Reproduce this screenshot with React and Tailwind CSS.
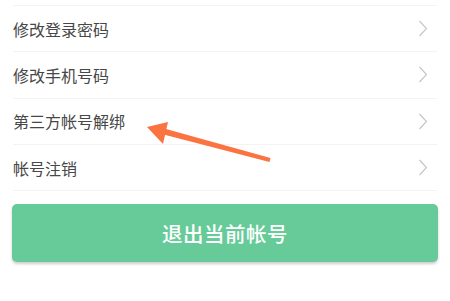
import React from "react";

const items = ["修改登录密码", "修改手机号码", "第三方帐号解绑", "帐号注销"];

const Chevron = () => (
  <svg width="10" height="17" viewBox="0 0 10 17" className="shrink-0">
    <path d="M1.5 1 L8.5 8.5 L1.5 16" fill="none" stroke="#c4c4c4" strokeWidth="1.1" />
  </svg>
);

const App = () => {
  return (
    <div
      className="relative w-[450px] h-[301px] bg-white overflow-hidden"
      style={{ fontFamily: '"Noto Sans CJK SC", "Noto Sans", sans-serif' }}
    >
      <div className="px-[13px]">
        <div className="h-[6px] border-b border-[#f3f3f3]" />
        {items.map((label) => (
          <div
            key={label}
            className="h-[46.3px] flex items-center justify-between border-b border-[#f3f3f3] pr-[9px]"
          >
            <span className="text-[16px] text-[#474747] leading-none">{label}</span>
            <Chevron />
          </div>
        ))}
      </div>

      <div className="px-[12px] pt-[13px]">
        <button className="w-full h-[58px] rounded-[5px] bg-[#66cb98] shadow-[0_2px_3px_rgba(0,0,0,0.2)] text-white text-[20.5px] font-medium tracking-[0.5px] flex items-center justify-center">
          退出当前帐号
        </button>
      </div>

      {/* annotation arrow */}
      <svg className="absolute inset-0 pointer-events-none" width="450" height="301">
        <polygon
          points="161.7,134 163.3,128.2 270.5,158.1 269.5,161.9"
          fill="#fa7340"
        />
        <polygon points="147,127 168,122 163,144" fill="#fa7340" />
      </svg>
    </div>
  );
};

export default App;
